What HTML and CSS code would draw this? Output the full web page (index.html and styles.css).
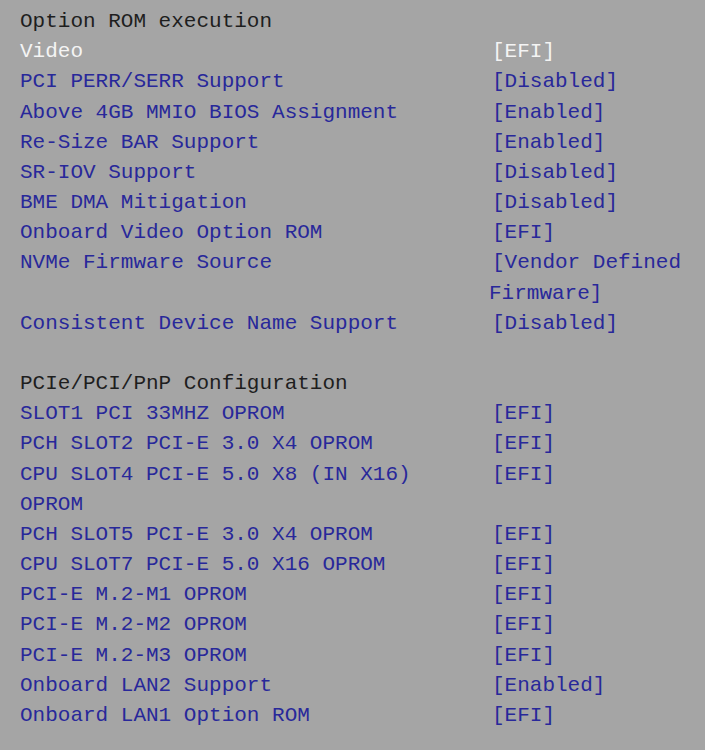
FILE: index.html
```html
<html>
<head>
    <meta charset="UTF-8">
    <title>Advanced - PCIe/PCI/PnP</title>
    <link rel="stylesheet" href="styles.css">
</head>
<body>
    <div id="setup">
        <div class="row heading"><span>Option ROM execution</span></div>
        <div class="row selected"><span>Video</span><span class="value">[EFI]</span></div>
        <div class="row"><span>PCI PERR/SERR Support</span><span class="value">[Disabled]</span></div>
        <div class="row"><span>Above 4GB MMIO BIOS Assignment</span><span class="value">[Enabled]</span></div>
        <div class="row"><span>Re-Size BAR Support</span><span class="value">[Enabled]</span></div>
        <div class="row"><span>SR-IOV Support</span><span class="value">[Disabled]</span></div>
        <div class="row"><span>BME DMA Mitigation</span><span class="value">[Disabled]</span></div>
        <div class="row"><span>Onboard Video Option ROM</span><span class="value">[EFI]</span></div>
        <div class="row"><span>NVMe Firmware Source</span><span class="value">[Vendor Defined<br><span class="wrap">Firmware]</span></span></div>
        <div class="row"><span>Consistent Device Name Support</span><span class="value">[Disabled]</span></div>
        <div class="row blank"></div>
        <div class="row heading"><span>PCIe/PCI/PnP Configuration</span></div>
        <div class="row"><span>SLOT1 PCI 33MHZ OPROM</span><span class="value">[EFI]</span></div>
        <div class="row"><span>PCH SLOT2 PCI-E 3.0 X4 OPROM</span><span class="value">[EFI]</span></div>
        <div class="row"><span>CPU SLOT4 PCI-E 5.0 X8 (IN X16)<br>OPROM</span><span class="value">[EFI]</span></div>
        <div class="row"><span>PCH SLOT5 PCI-E 3.0 X4 OPROM</span><span class="value">[EFI]</span></div>
        <div class="row"><span>CPU SLOT7 PCI-E 5.0 X16 OPROM</span><span class="value">[EFI]</span></div>
        <div class="row"><span>PCI-E M.2-M1 OPROM</span><span class="value">[EFI]</span></div>
        <div class="row"><span>PCI-E M.2-M2 OPROM</span><span class="value">[EFI]</span></div>
        <div class="row"><span>PCI-E M.2-M3 OPROM</span><span class="value">[EFI]</span></div>
        <div class="row"><span>Onboard LAN2 Support</span><span class="value">[Enabled]</span></div>
        <div class="row"><span>Onboard LAN1 Option ROM</span><span class="value">[EFI]</span></div>
    </div>
</body>
</html>
```

FILE: styles.css
```css
body {
    background-color: #a5a5a5;
    margin: 0;
    padding: 7px 0 0 20px;
    font-family: "Liberation Mono", monospace;
    font-size: 21px;
    line-height: 30.17px;
    color: #28289a;
}

#setup {
    display: flex;
    flex-direction: column;
}

.row {
    display: grid;
    grid-template-columns: 472px 1fr;
    white-space: nowrap;
}

.row.blank {
    height: 30.17px;
}

.heading {
    color: #1e1e1e;
}

.selected {
    color: #f4f4f4;
}

.wrap {
    margin-left: -3px;
}
```
